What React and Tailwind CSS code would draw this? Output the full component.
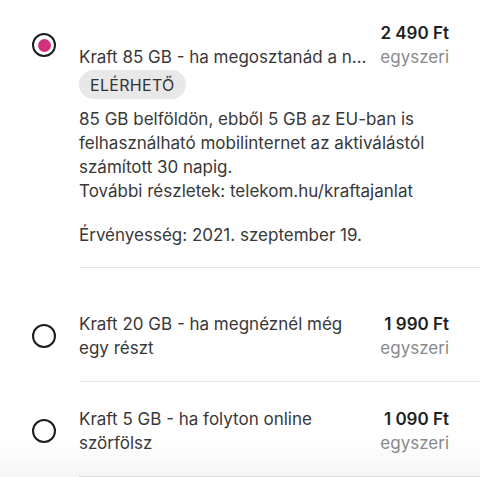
const offers = [
  {
    id: 'kraft85',
    name: 'Kraft 85 GB - ha megosztanád a n...',
    price: '2 490 Ft',
    selected: true,
  },
  {
    id: 'kraft20',
    name: 'Kraft 20 GB - ha megnéznél még egy részt',
    price: '1 990 Ft',
  },
  {
    id: 'kraft5',
    name: 'Kraft 5 GB - ha folyton online szörfölsz',
    price: '1 090 Ft',
  },
]

function Radio({ checked }) {
  return (
    <div className="w-6 h-6 shrink-0 rounded-full border-2 border-[#1c1c1c] flex items-center justify-center">
      {checked && <div className="w-[13px] h-[13px] rounded-full bg-[#d1307a]" />}
    </div>
  )
}

function OfferHeader({ offer }) {
  return (
    <div className="flex items-center">
      <div className="w-[79px] shrink-0 flex justify-end pr-[23px]">
        <Radio checked={offer.selected} />
      </div>
      <div className="flex-1 min-w-0 flex items-end justify-between gap-4 pr-[31px]">
        <div className={`min-w-0 text-[#383838] ${offer.selected ? 'whitespace-nowrap' : 'max-w-[282px]'}`}>{offer.name}</div>
        <div className="shrink-0 text-right">
          <div className="font-semibold text-[#1f1f1f]">{offer.price}</div>
          <div className="text-[#8a8a8a]">egyszeri</div>
        </div>
      </div>
    </div>
  )
}

export default function App() {
  return (
    <div
      className="relative w-[480px] h-[477px] overflow-hidden bg-white text-[17px] leading-6"
      style={{ fontFamily: 'Inter, "Noto Sans", sans-serif' }}
    >
      <div className="pt-[21px]">
        <OfferHeader offer={offers[0]} />
        <div className="pl-[79px] pr-[31px]">
          <span className="inline-flex items-center h-[29px] mt-px px-[11px] rounded-full bg-[#e8e8e8] text-[16px] tracking-[0.3px] text-[#333]">ELÉRHETŐ</span>
          <div className="mt-2 text-[#383838]">
            <p>85 GB belföldön, ebből 5 GB az EU-ban is felhasználható mobilinternet az aktiválástól számított 30 napig.</p>
            <p>További részletek: telekom.hu/kraftajanlat</p>
            <p className="mt-5">Érvényesség: 2021. szeptember 19.</p>
          </div>
        </div>
        <div className="ml-[79px] mt-5 h-px bg-[#e6e6e6]" />

        <div className="pt-[44px] pb-[21px]">
          <OfferHeader offer={offers[1]} />
        </div>
        <div className="ml-[79px] h-px bg-[#e6e6e6]" />

        <div className="pt-[25px] pb-[21px]">
          <OfferHeader offer={offers[2]} />
        </div>
        <div className="ml-[79px] h-px bg-[#e6e6e6]" />
      </div>
      <div className="pointer-events-none absolute inset-x-0 bottom-0 h-10 bg-gradient-to-b from-transparent to-black/[0.04]" />
    </div>
  )
}
